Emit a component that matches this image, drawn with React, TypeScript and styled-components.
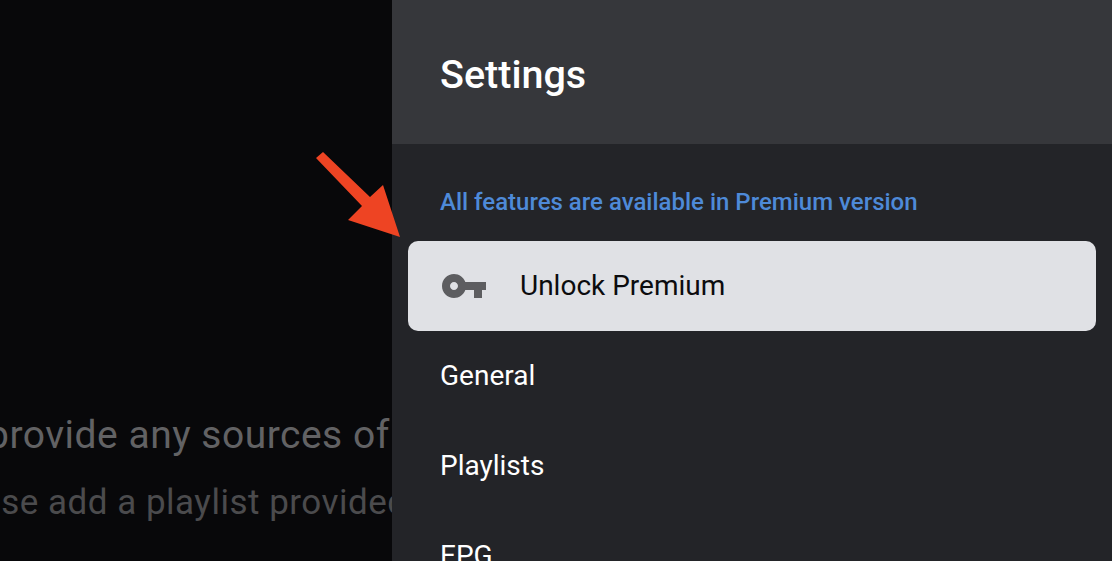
import { createGlobalStyle } from 'styled-components'
import styled from 'styled-components'

const Global = createGlobalStyle`
  html, body {
    margin: 0;
    height: 100%;
    background: #08080a;
    font-family: Roboto, "Liberation Sans", sans-serif;
  }
`

const Screen = styled.div`
  position: relative;
  display: flex;
  width: 1112px;
  height: 561px;
  overflow: hidden;
`

const Backdrop = styled.div`
  width: 392px;
  flex-shrink: 0;
  overflow: hidden;
  background: #08080a;
  padding-top: 412px;
  box-sizing: border-box;
`

const Message = styled.div<{ $tone: string; $size: number; $indent: number; $gap: number }>`
  color: ${ p => p.$tone };
  font-size: ${ p => p.$size }px;
  letter-spacing: 0.5px;
  line-height: 46px;
  white-space: nowrap;
  margin-left: ${ p => p.$indent }px;
  margin-bottom: ${ p => p.$gap }px;
`

const Panel = styled.div`
  flex: 1;
  display: flex;
  flex-direction: column;
  background: #232428;
`

const Header = styled.header`
  height: 144px;
  flex-shrink: 0;
  display: flex;
  align-items: center;
  padding: 4px 0 0 48px;
  box-sizing: border-box;
  background: #36373b;
`

const Title = styled.h1`
  margin: 0;
  color: #fff;
  font-size: 39.5px;
  font-weight: 500;
`

const Notice = styled.div`
  color: #4e8ad8;
  font-size: 24px;
  font-weight: 500;
  line-height: 30px;
  padding: 43px 0 24px 48px;
`

const Menu = styled.nav`
  display: flex;
  flex-direction: column;
  padding: 0 16px;
`

const Row = styled.div<{ $active?: boolean }>`
  height: 90px;
  flex-shrink: 0;
  display: flex;
  align-items: center;
  gap: 32px;
  padding: 0 0 2px 32px;
  box-sizing: border-box;
  border-radius: 10px;
  font-size: 28px;
  color: ${ p => p.$active ? '#0c0c0e' : '#fff' };
  background: ${ p => p.$active ? '#e0e1e5' : 'transparent' };
`

const KeyIcon = styled.svg`
  width: 48px;
  height: 48px;
  margin-top: 2px;
  fill: #5d5d60;
`

const Arrow = styled.svg`
  position: absolute;
  left: 310px;
  top: 148px;
  width: 100px;
  height: 100px;
`

export default function App() {
  return (
    <Screen>
      <Global />
      <Backdrop>
        <Message $tone="#626264" $size={39} $indent={-13} $gap={22}>provide any sources of media content</Message>
        <Message $tone="#4b4b4d" $size={35} $indent={-69} $gap={0}>Please add a playlist provided by your operator</Message>
      </Backdrop>
      <Panel>
        <Header>
          <Title>Settings</Title>
        </Header>
        <Notice>All features are available in Premium version</Notice>
        <Menu>
          <Row $active>
            <KeyIcon viewBox="0 0 24 24">
              <path d="M12.65 10C11.83 7.67 9.61 6 7 6c-3.31 0-6 2.69-6 6s2.69 6 6 6c2.61 0 4.83-1.67 5.65-4H17v4h4v-4h2v-4H12.65zM7 14c-1.1 0-2-.9-2-2s.9-2 2-2 2 .9 2 2-.9 2-2 2z" />
            </KeyIcon>
            Unlock Premium
          </Row>
          <Row>General</Row>
          <Row>Playlists</Row>
          <Row>EPG</Row>
        </Menu>
      </Panel>
      <Arrow viewBox="0 0 100 100">
        <polygon points="6,10 13,4 60,49 73,37 90,89 38,72 52,58" fill="#ee4423" />
      </Arrow>
    </Screen>
  )
}
